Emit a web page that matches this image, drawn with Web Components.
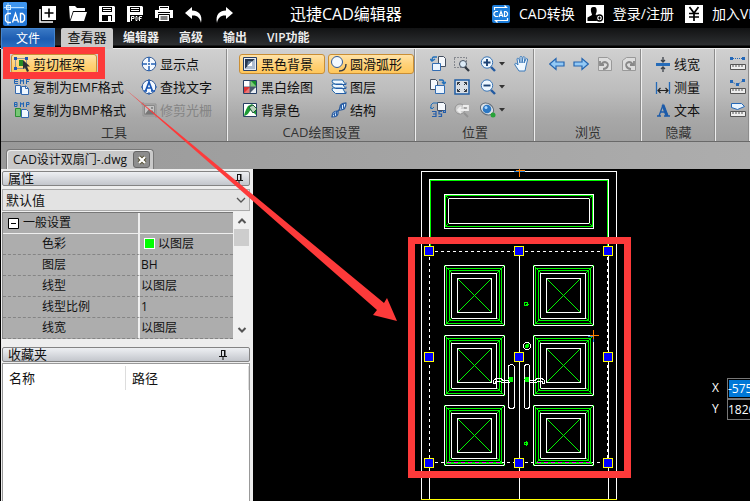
<!DOCTYPE html>
<html lang="zh-CN">
<head>
<meta charset="utf-8">
<title>迅捷CAD编辑器</title>
<style>
html, body { margin: 0; height: 100%; }
body { overflow: hidden; background: #000; font: 13px/20px "Open Sans", "Noto Sans CJK SC", sans-serif; color: #111; }
</style>
</head>
<body>
<cad-app></cad-app>
<script>
const ICONS = {
  logo: ['0 0 24 24', '<rect width="24" height="24" rx="2" fill="#2478d8"/><path d="M0 2a2 2 0 0 1 2-2h20a2 2 0 0 1 2 2v5H0z" fill="#3f95ee"/><path d="M5 1v22M1 5.500h20" stroke="#b5dcff" fill="none"/><rect x="3.500" y="3.500" width="4" height="4" fill="none" stroke="#d8eeff"/><path d="M8 11.500H4.500l-2 2v5l2 2H8M9.500 20.500L12.500 11.500l3 9M10.500 18h4M17.500 11.500v8.500h2l2-2v-4.500l-2-2z" fill="none" stroke="#fff" stroke-width="1.400"/>'],
  add: ['0 0 18 18', '<path d="M3 1h14v14H3z" fill="#fff"/><path d="M1 4v13h13" fill="none" stroke="#fff" stroke-width="1.500"/><path d="M10 3.500v9M5.500 8h9" stroke="#000" stroke-width="1.600"/>'],
  open: ['0 0 18 18', '<path d="M0 1h6l2 2h8v3H4L1 15z" fill="#fff"/><path d="M4.500 7H18l-3 9H1.500z" fill="#fff"/>'],
  save: ['0 0 16 18', '<path d="M0 1h15l1 1v15H0z" fill="#fff"/><path d="M3 2h10v5H3z" fill="#000"/><path d="M4 3.500h8M4 5.500h8" stroke="#fff"/><path d="M3 10h10v6H3z" fill="#000"/><path d="M9 11h3v5H9z" fill="#fff"/>'],
  pdf: ['0 0 16 18', '<path d="M0 1h15l1 1v15H0z" fill="#fff"/><path d="M3 2h10v5H3z" fill="#000"/><path d="M4 3.500h8M4 5.500h8" stroke="#fff"/><path d="M3 10h13v7H3z" fill="#000"/><path d="M4.500 16v-4.500H7v2H4.500M9 11.500v4h1l1-1v-2l-1-1zM12.500 16v-4.500H15M12.500 13.500h2" fill="none" stroke="#fff"/>'],
  print: ['0 0 18 18', '<path d="M4 1h10v4H4zM0 5h18v8h-3v-2H3v2H0z" fill="#fff"/><path d="M5 2.500h8M3 7.500h12" stroke="#000"/><path d="M3.500 9.500h11v7h-11z" fill="#fff" stroke="#000"/><path d="M5.500 12h7M5.500 14h7" stroke="#000"/>'],
  undo: ['0 0 18 18', '<path d="M0 8l7-6v3.500c6 0 11 4 9 12.500C15 12.500 12 10 7 10.500V14z" fill="#fff"/>'],
  redo: ['0 0 18 18', '<path d="M18 8l-7-6v3.500C5 5.500 0 9.500 2 18 3 12.500 6 10 11 10.500V14z" fill="#fff"/>'],
  convert: ['0 0 18 18', '<rect width="18" height="18" rx="2" fill="#1d7edb"/><path d="M2.500 5V2.500h12l-2-2M15.500 13v2.500h-12l2 2" fill="none" stroke="#fff" stroke-width="1.200"/><path d="M6 6.500H3.500L2 8v2l1.500 1.500H6M7 12l2-5.500 2 5.500M7.500 10.500h3M12.500 6.500v5H14L15.500 10V8L14 6.500z" fill="none" stroke="#fff" stroke-width="1.200"/>'],
  user: ['0 0 18 18', '<path d="M0 0h18v18H0z" fill="#fff"/><path d="M7.500 2C5 2 4.500 4 5 6.500c.3 1.700 1 2.500 1 3.500L1.500 12.500V16H11l-1-4 1-2-1.500-.5C10.500 8 11 6 10.500 4S9 2 7.500 2z" fill="#000"/><circle cx="13.500" cy="13" r="3" fill="#fff" stroke="#000" stroke-width="1.300"/><path d="M13.500 11.500v3M12 13h3" stroke="#000"/>'],
  yen: ['0 0 18 18', '<path d="M0 0h18v18H0z" fill="#fff"/><path d="M4.500 2L9 8l4.500-6M9 8v8M4 8.500h10M4 12h10" fill="none" stroke="#000" stroke-width="1.700"/>'],
  clip: ['0 0 16 16', '<path d="M1.500 2.500h11v10h-11z" fill="none" stroke="#2457a8" stroke-dasharray="1 1"/><path d="M0 1h3v3H0zM11 1h3v3h-3zM0 11h3v3H0z" fill="#1e55b5"/><path d="M5 4h4v6H5z" fill="#258b25"/><path d="M9 4v9l2-1.500 2 4.500 2-1-2-4.500h3z" fill="#2c3037"/>'],
  emf: ['0 0 16 16', '<path d="M4 .5H.5v4H4M.5 2.500H4M6.500 5V.5L8 2.500 9.500.5V5M12.500 5V.5H16M12.500 2.500H15" fill="none" stroke="#2065b5"/><path d="M1.500 6.500h5v8h-5zM7.500 7.500h5l2 2v6h-7z" fill="#eff7ff" stroke="#3569ae"/><path d="M11.500 6.500v3h3" fill="none" stroke="#3569ae"/>'],
  bmp: ['0 0 16 16', '<path d="M.5.5H3v4H.5zM.5 2.500H3M6.500 5V.5L8 2.500 9.500.5V5M12.500 5V.5H15v2h-2.500" fill="none" stroke="#2065b5"/><path d="M1.500 6.500h5v8h-5z" fill="#77c775" stroke="#2c8e35"/><path d="M7.500 7.500h5l2 2v6h-7z" fill="#eff7ff" stroke="#3569ae"/>'],
  target: ['0 0 16 16', '<circle cx="8" cy="8" r="6.800" fill="#f4f9ff" stroke="#315b98"/><path d="M8 1v5M8 10v5M1 8h5M10 8h5" stroke="#2461b5" stroke-width="1.500"/><circle cx="8" cy="8" r="1" fill="#2461b5"/>'],
  find: ['0 0 16 16', '<circle cx="8" cy="8" r="6.800" fill="#f4f9ff" stroke="#315b98"/><path d="M8 0v3M8 13v3M0 8h2M14 8h2" stroke="#2461b5"/><path d="M3 12h3M10 12h4M4.500 12L8 3l3.500 9M6 9h4" fill="none" stroke="#1856b4" stroke-width="1.700"/>'],
  raster: ['0 0 16 16', '<path d="M3.500 3.500h10v9h-10z" fill="#c5c5c5" stroke="#888"/><path d="M2 0v14h14M0 2h15v14" fill="none" stroke="#929292"/><path d="M4 12l4-5 2 2 1-1 3 4z" fill="#777"/><circle cx="11" cy="6" r="1" fill="#777"/>'],
  black: ['0 0 16 16', '<path d="M1.500 1.500h13v13h-13z" fill="#e7edf5" stroke="#263e66"/><path d="M3 3h10L3 13z" fill="#27384f"/><path d="M13 3v10H3z" fill="#aebdd0"/><path d="M10 5v5H5z" fill="#fff"/><path d="M5 10l5-5H6z" fill="#607a98"/>'],
  mono: ['0 0 16 16', '<path d="M1.500 1.500h13v13h-13z" fill="#fff" stroke="#273e63"/><path d="M2 8h6v6H2z" fill="#eb7777"/><path d="M8 2h6v6H8z" fill="#79c875"/><path d="M8 8h6v6H8z" fill="#e9eef4"/><path d="M8 2v12M2 8h12" stroke="#52647b"/><path d="M8 8v6l6-6z" fill="#46566b"/><path d="M2 14V8h6z" fill="#d33"/><path d="M9 2h5v5z" fill="#16902a"/>'],
  bg: ['0 0 16 16', '<path d="M1.500 1.500h13v13h-13z" fill="#fff" stroke="#273e63"/><path d="M2 14c1-5 2-6 4-10l4-2 4 5v6l-5-5c-2 1-2 5-7 6z" fill="#1d9b35"/><path d="M7 5l4-2 4 4-4 4z" fill="#bbd4bc" stroke="#1b5e37"/>'],
  arc: ['0 0 16 16', '<circle cx="6" cy="6" r="5.500" fill="#f3f9ff" stroke="#325a95"/><path d="M15 8c0 4-2 7-7 7" fill="none" stroke="#333b47" stroke-width="1.400"/>'],
  layers: ['0 0 16 16', '<path d="M1.500 9h10l3 5.500h-10L1 11zM1.500 5h10l3 4.500h-10L1 7zM1.500 1h10l3 4.500h-10L1 3z" fill="#eff8ff" stroke="#266bad"/><path d="M5 5.500h10v-2M5 9.500h10v-2M5 14.500h10v-2" fill="none" stroke="#245ca5"/>'],
  structure: ['0 0 16 16', '<path d="M1 15c0-3 1-6 5-6 3 0 3-2 3-4 0-3 3-4 6-4 0 3-1 7-5 7-3 0-3 1-3 3 0 3-3 4-6 4z" fill="#dceeff" stroke="#28599c" stroke-width="1.200"/><path d="M1 15C2 10 6 12 8 8s2-6 7-7" fill="none" stroke="#28599c"/><path d="M3.500 10.500v4M5.500 9v5M10.500 2.500v5M12.500 1.500v5" stroke="#275fac"/>'],
  cclw: ['0 0 16 16', '<path d="M8.500.5h5l2 2v8h-7z" fill="#f5f8fc" stroke="#444f60"/><path d="M2.500 7.500h8v7h-8z" fill="#eaf4ff" stroke="#326db3"/><path d="M7 1H4C2 1 2 3 2 5M0 3l2 2 3-2" fill="none" stroke="#2270bb" stroke-width="1.400"/>'],
  cw: ['0 0 16 16', '<path d="M.5.5h5l2 2v8h-7z" fill="#f5f8fc" stroke="#444f60"/><path d="M5.500 6.500h9v8h-9z" fill="#eaf4ff" stroke="#326db3"/><path d="M9 1h3c2 0 2 2 2 4M12 3l2 2 2-2" fill="none" stroke="#2270bb" stroke-width="1.400"/>'],
  rotate35: ['0 0 16 16', '<path d="M7.500.5h6l2 2v6h-8z" fill="#f5f8fc" stroke="#444f60"/><path d="M8 1H3L1 3v4M0 5l2 2 2-2" fill="none" stroke="#2270bb"/><path d="M2 9.500h4v5H2M3 12h3M12 9.500H9V12h2.500v2.500H8.500M13.500 8.500h2v2h-2z" fill="none" stroke="#245da9" stroke-width="1.200"/>'],
  area: ['0 0 16 16', '<path d="M.5 1.500h12v10H.5z" fill="none" stroke="#424854" stroke-dasharray="1 2"/><circle cx="9" cy="8" r="3.500" fill="#ddebf7" stroke="#475363"/><path d="M11 11l4 4" stroke="#303740" stroke-width="2.300"/>'],
  fit: ['0 0 16 16', '<path d="M1 1h14v14H1z" fill="#d9dee4" stroke="#205ea4" stroke-width="1.500"/><path d="M3.500 6V3.500H6M10 3.500h2.500V6M12.500 10v2.500H10M6 12.500H3.500V10M3.500 3.500L6 6M12.500 3.500L10 6M3.500 12.500L6 10M12.500 12.500L10 10" fill="none" stroke="#30363f"/>'],
  prev: ['0 0 16 16', '<circle cx="6" cy="7" r="5" fill="#cfcfcf" stroke="#929292"/><path d="M10 11l4 4" stroke="#929292" stroke-width="2"/><path d="M4 8h10V4H9M7 5L4 8l3 3" fill="none" stroke="#eee" stroke-width="1.800"/>'],
  plus: ['0 0 16 16', '<circle cx="7" cy="6.500" r="5.700" fill="#edf7ff" stroke="#3874b5"/><path d="M11 11l4 4" stroke="#225aa1" stroke-width="2.400"/><path d="M7 3v7M3.500 6.500h7" stroke="#1e4374" stroke-width="1.900"/>'],
  minus: ['0 0 16 16', '<circle cx="7" cy="6.500" r="5.700" fill="#edf7ff" stroke="#3874b5"/><path d="M11 11l4 4" stroke="#225aa1" stroke-width="2.400"/><path d="M3.500 6.500h7" stroke="#1e4374" stroke-width="1.900"/>'],
  orbit: ['0 0 16 16', '<ellipse cx="7" cy="7" rx="7" ry="5.500" transform="rotate(35 7 7)" fill="#dce1e6" stroke="#626d78"/><circle cx="7" cy="7" r="4.300" fill="#2c78c4"/><circle cx="6" cy="5.500" r="1.500" fill="#abd8ff"/><circle cx="13" cy="13" r="2.500" fill="#27a338"/>'],
  hand: ['0 0 16 16', '<path d="M5 15L1 9c-1-2 1-2 2-1l1 1-1-6c0-1 1.500-1 2 0l1 4V1.500C6 0 8 0 8 1.500V7l1-5.500C9 0 11 .5 11 2l-1 5 2-4c.5-1 2-.5 1.500 1L12 10l-1 5z" fill="#eff8ff" stroke="#3a79b9"/>'],
  left: ['0 0 16 16', '<path d="M.7 8L7 2.500V6h8v4H7v3.500z" fill="#93c9f5" stroke="#2465b0" stroke-width="1.200"/>'],
  right: ['0 0 16 16', '<path d="M15.300 8L9 2.500V6H1v4h8v3.500z" fill="#93c9f5" stroke="#2465b0" stroke-width="1.200"/>'],
  pageback: ['0 0 16 16', '<path d="M1.500 1.500h9l4 3v10h-13z" fill="#ddd" stroke="#999"/><path d="M6 13c5 0 7-6 2-7-2 0-3 1-4 3M3 5v4h4" fill="none" stroke="#888" stroke-width="1.800"/>'],
  pagenext: ['0 0 16 16', '<path d="M1.500 4.500l4-3h9v13h-13z" fill="#ddd" stroke="#999"/><path d="M10 13c-5 0-7-6-2-7 2 0 3 1 4 3M13 5v4H9" fill="none" stroke="#888" stroke-width="1.800"/>'],
  lwidth: ['0 0 16 16', '<path d="M1 7h14v3H1z" fill="#266cb9"/><path d="M8 1v5M6 4l2 2 2-2M8 16v-5M6 13l2-2 2 2" fill="none" stroke="#3b4149" stroke-width="1.300"/>'],
  measure: ['0 0 16 16', '<path d="M1.500 3v12M14.500 3v12" stroke="#236ab9" stroke-width="1.300"/><path d="M3 11.500h10M5.500 9L3 11.500 5.500 14M10.500 9l2.500 2.500L10.500 14" fill="none" stroke="#222" stroke-width="1.200"/>'],
  letter: ['0 0 16 16', '<path d="M2 14h4M9 14h6M4 14l4-11 5 11M5.500 10h5" fill="none" stroke="#1c5ba9" stroke-width="1.300"/><path d="M8 3l4 11" stroke="#1c5ba9" stroke-width="3"/>'],
  ruler1: ['0 0 16 16', '<path d="M1 2.500h14" stroke="#2468b8" stroke-dasharray="1 1"/><path d="M0 1h3v3H0zM12 1h3v3h-3z" fill="#2468b8"/><path d="M.5 8.500h15v5H.5z" fill="#eee" stroke="#555"/><path d="M3 9v2M6 9v2M9 9v2M12 9v2" stroke="#555"/>'],
  ruler2: ['0 0 16 16', '<path d="M1 2l6 4 7-5" fill="none" stroke="#2468b8" stroke-dasharray="1 1"/><path d="M0 1h3v3H0zM6 4h3v3H6zM12 0h3v3h-3z" fill="#2468b8"/><path d="M.5 9.500h15v5H.5z" fill="#eee" stroke="#555"/><path d="M3 10v2M6 10v2M9 10v2M12 10v2" stroke="#555"/>'],
  ruler3: ['0 0 16 16', '<path d="M1.500 1.500h10l3 3-7 3-6-2z" fill="#eaf5ff" stroke="#2468b8"/><path d="M.5 9.500h15v5H.5z" fill="#eee" stroke="#555"/><path d="M3 10v2M6 10v2M9 10v2M12 10v2" stroke="#555"/>'],
  pin: ['0 0 10 12', '<path d="M3.500 1v6M3 1.500h4M1 7.500h8M5 8v3" fill="none" stroke="#111"/><path d="M6 1h1.500v6H6z" fill="#111"/>'],
  chevron: ['0 0 10 10', '<path d="M1 3l4 4 4-4" fill="none" stroke="#555" stroke-width="1.300"/>'],
  up: ['0 0 10 10', '<path d="M1.500 7L5 3.500 8.500 7" fill="none" stroke="#555" stroke-width="2"/>'],
  down: ['0 0 10 10', '<path d="M1.500 3L5 6.500 8.500 3" fill="none" stroke="#555" stroke-width="2"/>'],
  close: ['0 0 10 10', '<path d="M2 2l6 6M8 2L2 8" stroke="#555033" stroke-width="4"/><path d="M2 2l6 6M8 2L2 8" stroke="#fff" stroke-width="2.200"/>'],
  collapse: ['0 0 11 11', '<path d="M.5.500h10v10H.5z" fill="#fff" stroke="#000"/><path d="M3 5.500h5" stroke="#000"/>'],
  caret: ['0 0 6 4', '<path d="M0 0h6L3 3.500z" fill="#333"/>']
};

function define(name, html) {
  customElements.define(name, class extends HTMLElement {
    connectedCallback() {
      if (this.shadowRoot) return;
      this.attachShadow({ mode: 'open' }).innerHTML = typeof html === 'function' ? html(this) : html;
    }
  });
}
const RESET = 'button{font:inherit;color:inherit;background:none;border:0;padding:0;margin:0}a{color:inherit;text-decoration:none}*{box-sizing:border-box}';

define('cad-icon', el => {
  const [box, art] = ICONS[el.getAttribute('name')];
  const [, , w, h] = box.split(' ');
  return `<style>:host{display:block;flex:none;line-height:0}svg{display:block}</style><svg width="${w}" height="${h}" viewBox="${box}" aria-hidden="true">${art}</svg>`;
});

define('title-bar', `<style>${RESET}
:host{display:flex;align-items:center;height:28px;background:#000;color:#fff;padding-left:3px;overflow:hidden}
.quick{display:flex;gap:12px;align-items:center;flex:none}
h1{font:inherit;font-size:16px;line-height:28px;margin:0;padding-left:57px;flex:1 0 259px}
nav{display:flex;flex:none;font-size:14px;gap:11px}
a{display:flex;gap:9px;align-items:center;white-space:nowrap}
</style>
<div class="quick"><cad-icon name="logo"></cad-icon>
<button aria-label="新建"><cad-icon name="add"></cad-icon></button><button aria-label="打开"><cad-icon name="open"></cad-icon></button><button aria-label="保存"><cad-icon name="save"></cad-icon></button><button aria-label="保存为PDF"><cad-icon name="pdf"></cad-icon></button><button aria-label="打印"><cad-icon name="print"></cad-icon></button><button aria-label="撤销"><cad-icon name="undo"></cad-icon></button><button aria-label="重做"><cad-icon name="redo"></cad-icon></button></div>
<h1><slot></slot></h1>
<nav><a href="#convert"><cad-icon name="convert"></cad-icon>CAD转换</a><a href="#login"><cad-icon name="user"></cad-icon>登录/注册</a><a href="#vip"><cad-icon name="yen"></cad-icon>加入VIP</a></nav>`);

define('menu-bar', `<style>${RESET}
:host{display:flex;align-items:stretch;height:21px;padding-left:1px;background:linear-gradient(#121314,#2d2f31 17px,#000 18px,#000 20px,#eee 20px);color:#eee;font-size:12px;font-weight:600;line-height:19px}
button{flex:none;padding:0 10px 2px}
.file{width:54px;background:linear-gradient(#3978c4,#1d5db2 50%,#2d73c5);color:#fff;font-weight:400;margin-right:6px;border:1px solid #4385cf;border-bottom:0}
.on{width:52px;padding:0 0 2px;background:#cbcbcb;color:#111;font-size:13px;font-weight:400;border-radius:2px 2px 0 0}
</style><button class="file">文件</button><button class="on">查看器</button><button>编辑器</button><button>高级</button><button>输出</button><button>VIP功能</button>`);

define('ribbon-button', el => `<style>${RESET}
:host{display:block;height:20px}
button{display:flex;align-items:center;gap:3px;height:20px;min-width:86px;padding:0 2px;border:1px solid transparent;border-radius:3px;white-space:nowrap;line-height:18px}
:host([on]) button{background:linear-gradient(#ffe3a8,#ffd27a 50%,#ffc75b);border-color:#c98e35}
button:disabled{color:#858585}
</style><button ${el.hasAttribute('disabled') ? 'disabled' : ''}><cad-icon name="${el.getAttribute('icon')}"></cad-icon><slot></slot></button>`);

define('tool-button', el => `<style>${RESET}
:host{display:block;height:20px}button{display:flex;align-items:center;gap:3px;height:20px}
</style><button aria-label="${el.getAttribute('label')}"><cad-icon name="${el.getAttribute('icon')}"></cad-icon>${el.hasAttribute('menu') ? '<cad-icon name="caret"></cad-icon>' : ''}</button>`);

define('ribbon-group', el => `<style>
:host{display:flex;flex-direction:column;flex:none;box-sizing:border-box;height:93px;padding-top:5px;border-right:1px solid #eee;box-shadow:inset -1px 0 #8c8c8c}
:host(:last-of-type){flex:1 0 34px;overflow:hidden}
.tools{display:grid;grid-auto-flow:column;grid-template-rows:repeat(3,20px);justify-content:start;gap:3px 0;padding-left:var(--start)}
h2{margin:0;font:inherit;line-height:20px;text-align:center;padding-top:2px;color:#333}
</style><div class="tools"><slot></slot></div><h2>${el.getAttribute('label')}</h2>`);

define('cad-ribbon', `<style>
:host{display:flex;margin-left:1px;height:93px;background:linear-gradient(#d0d0d0,#bdbdbd 45%,#a8a8a8 75%,#9f9f9f);border-bottom:1px solid #696969;overflow:hidden;box-sizing:border-box}
.a{width:227px;--start:10px}.b{width:188px;--start:11px}.c{width:119px;--start:14px}.d{width:107px;--start:14px}.e{width:74px;--start:10px}.f{--start:14px}
.a ribbon-button:nth-child(-n+3){width:127px}.b ribbon-button:nth-child(-n+3){width:89px}
.c tool-button:nth-child(-n+3){width:24px}.c tool-button:nth-child(n+4):nth-child(-n+6){width:26px}.c tool-button:nth-child(n+7){width:34px}.c tool-button:last-child{width:16px}
.d tool-button{width:24px;grid-row:1}
</style>
<ribbon-group class="a" label="工具"><ribbon-button icon="clip" on>剪切框架</ribbon-button><ribbon-button icon="emf">复制为EMF格式</ribbon-button><ribbon-button icon="bmp">复制为BMP格式</ribbon-button><ribbon-button icon="target">显示点</ribbon-button><ribbon-button icon="find">查找文字</ribbon-button><ribbon-button icon="raster" disabled>修剪光栅</ribbon-button></ribbon-group>
<ribbon-group class="b" label="CAD绘图设置"><ribbon-button icon="black" on>黑色背景</ribbon-button><ribbon-button icon="mono">黑白绘图</ribbon-button><ribbon-button icon="bg">背景色</ribbon-button><ribbon-button icon="arc" on>圆滑弧形</ribbon-button><ribbon-button icon="layers">图层</ribbon-button><ribbon-button icon="structure">结构</ribbon-button></ribbon-group>
<ribbon-group class="c" label="位置"><tool-button icon="cclw" label="左旋转"></tool-button><tool-button icon="cw" label="右旋转"></tool-button><tool-button icon="rotate35" label="旋转35°"></tool-button><tool-button icon="area" label="窗口缩放"></tool-button><tool-button icon="fit" label="适应窗口"></tool-button><tool-button icon="prev" label="上一视图"></tool-button><tool-button icon="plus" menu label="放大"></tool-button><tool-button icon="minus" menu label="缩小"></tool-button><tool-button icon="orbit" menu label="三维动态"></tool-button><tool-button icon="hand" label="平移"></tool-button></ribbon-group>
<ribbon-group class="d" label="浏览"><tool-button icon="left" label="后退"></tool-button><tool-button icon="right" label="前进"></tool-button><tool-button icon="pageback" label="撤销视图"></tool-button><tool-button icon="pagenext" label="重做视图"></tool-button></ribbon-group>
<ribbon-group class="e" label="隐藏"><ribbon-button icon="lwidth">线宽</ribbon-button><ribbon-button icon="measure">测量</ribbon-button><ribbon-button icon="letter">文本</ribbon-button></ribbon-group>
<ribbon-group class="f" label=""><tool-button icon="ruler1" label="距离"></tool-button><tool-button icon="ruler2" label="多段线长度"></tool-button><tool-button icon="ruler3" label="面积"></tool-button></ribbon-group>`);

define('document-tabs', `<style>${RESET}
:host{display:flex;align-items:flex-end;height:27px;margin-left:1px;padding-left:5px;background:linear-gradient(90deg,#999,#adadad);box-sizing:border-box}
.tab{display:flex;align-items:center;gap:6px;height:20px;padding:0 3px 0 6px;border:1px solid #777;border-bottom:0;border-radius:4px 4px 0 0;background:#c9c9c9;box-shadow:inset 1px 1px #eee;font-size:12px}
button{display:grid;place-items:center;width:17px;height:17px;background:#8d8d8d;border:1px solid #666;border-radius:3px}
</style><div class="tab"><slot></slot><button aria-label="关闭"><cad-icon name="close"></cad-icon></button></div>`);

define('panel-header', `<style>${RESET}
:host{display:flex;align-items:center;justify-content:space-between;height:15px;box-sizing:border-box;border:1px solid #848484;border-radius:2px;background:linear-gradient(#eef0f3,#c3c6cc);padding:0 5px;line-height:13px}
button{display:block;margin-right:var(--pin,0)}</style><slot></slot><button aria-label="固定"><cad-icon name="pin"></cad-icon></button>`);

define('properties-panel', `<style>${RESET}
:host{display:block;padding:2px 3px 0 2px}
label{display:flex;align-items:center;height:22px;margin:3px 0 1px;border:1px solid #aaa;background:#e3e3e3;padding-right:3px}
select{appearance:none;border:0;background:none;font:inherit;color:inherit;flex:1;padding:0 3px;height:20px}
.grid{display:flex;background:#f4f4f4;border-left:1px solid #888}
table{flex:1;table-layout:fixed;border-collapse:separate;border-spacing:0;background:#adadad;font-size:12px;line-height:20px;border-top:1px solid #777}
th,td{height:21px;padding:0;font-weight:400;text-align:left;border-bottom:1px dashed #858585;white-space:nowrap}
th{width:137px;padding-left:39px;border-right:2px solid #eee}
td{padding-left:1px}
.head th{padding-left:5px}.head th,.head td{height:20px;border-bottom:1px solid #eee}
.head th div{display:flex;gap:4px;align-items:center}
.swatch{display:inline-block;width:11px;height:11px;margin:0 3px;border:1px solid #fff;background:#0f0;vertical-align:-1px}
.scroll{width:17px;display:flex;flex-direction:column;align-items:center;background:#f0f0f0;padding:4px 0}
.thumb{width:15px;height:17px;background:#cdcdcd;margin:3px 0 auto}
</style><panel-header>属性</panel-header>
<label><select aria-label="属性集"><option>默认值</option></select><cad-icon name="chevron"></cad-icon></label>
<div class="grid"><table><tr class="head"><th><div><cad-icon name="collapse"></cad-icon>一般设置</div></th><td></td></tr>
<tr><th>色彩</th><td><span class="swatch"></span>以图层</td></tr><tr><th>图层</th><td>BH</td></tr><tr><th>线型</th><td>以图层</td></tr><tr><th>线型比例</th><td>1</td></tr><tr><th>线宽</th><td>以图层</td></tr></table>
<div class="scroll"><button aria-label="向上"><cad-icon name="up"></cad-icon></button><div class="thumb"></div><button aria-label="向下"><cad-icon name="down"></cad-icon></button></div></div>`);

define('favorites-panel', `<style>
:host{display:flex;flex-direction:column;flex:1;padding:8px 3px 0 2px}
.list{flex:1;background:#fff;border:1px solid #999;border-bottom:0;margin-top:1px}
table{width:100%;table-layout:fixed;border-spacing:0 2px}
th{font-weight:400;text-align:left;height:24px;padding:0 6px;border-right:1px solid #ddd}
</style><panel-header style="--pin:16px">收藏夹</panel-header><div class="list"><table><tr><th>名称</th><th>路径</th></tr></table></div>`);

function doorArt() {
  const rect = (x, y, w, h, c) => `<rect x="${x}.5" y="${y}.5" width="${w}" height="${h}" stroke="${c}"/>`;
  const W = '#fff', G = '#00f500';
  let s = `<path d="M421.500 499V171.500h195V499M429.500 251V179.500h179V251M608.500 251V499M429.500 463V499M519.500 251V499" stroke="#fff"/>
<path d="M430.500 250V180.500h177V250" stroke="${G}"/><path d="M421 499.500h196" stroke="#ff0"/>`;
  s += rect(444, 194, 149, 34, W) + rect(445, 195, 147, 31, G) + rect(448, 198, 141, 25, W);
  s += `<path d="M445 195l4 4M593 195l-4 4M445 227l4-4M593 227l-4-4" stroke="${G}"/>`;
  for (const x of [444, 533]) for (const y of [265, 335, 405]) {
    s += rect(x, y, 60, 60, W) + rect(x + 2, y + 3, 55, 55, G) + rect(x + 5, y + 5, 50, 50, G) + rect(x + 7, y + 8, 45, 45, W) + rect(x + 13, y + 13, 34, 34, W);
    s += `<path d="M${x} ${y}l8 8M${x + 61} ${y}l-8 8M${x} ${y + 61}l8-8M${x + 61} ${y + 61}l-8-8M${x + 14} ${y + 14}l33 33M${x + 47} ${y + 14}l-33 33" stroke="${G}"/>`;
  }
  s += `<rect x="508.500" y="364.500" width="6" height="44" rx="3" stroke="#fff"/><rect x="524.500" y="364.500" width="5" height="44" rx="2.500" stroke="#fff"/>
<path d="M509 380.500h-6l-2-2h-5l-2.500 2v3h2v-2h4l3 1h7M527 380.500h8l2-2h5l2.500 2v3h-2v-2h-4l-3 1h-7" stroke="#fff"/>
<circle cx="511" cy="379.500" r="2.500" fill="${G}"/><circle cx="527" cy="379.500" r="2.500" fill="${G}"/>
<circle cx="527" cy="346" r="3.500" stroke="#fff"/><path d="M525 346l3-2v3l-3 1z" fill="${G}" stroke="${G}"/>
<path d="M524.500 302.500h3v3h-3zM526 304h3M524.500 442.500h3v2h-3zM526 441v5" stroke="${G}"/>
<path d="M429.500 251V463M607.500 251V463" stroke="#fff" stroke-dasharray="3 3"/><path d="M429 251.500h179M429 462.500h179" stroke="#fff" stroke-dasharray="3 3"/>
<path d="M447 462.500h55M537 462.500h55" stroke="${G}"/><path d="M447 462.500h55M537 462.500h55" stroke="#f0f" stroke-dasharray="4 3"/>
<path d="M514 171.500h11M588 336.500h5v5" stroke="#2f86dc"/><path d="M519 169v8M516 170.500h9M593 330v9M590 335.500h9" stroke="#ff8000"/>`;
  for (const x of [424, 514, 603]) for (const y of [246, 352, 458]) s += `<rect x="${x}.5" y="${y}.5" width="9" height="9" fill="#00f" stroke="#ff0"/>`;
  return s;
}
define('drawing-canvas', `<style>
:host{display:block;position:relative;flex:1;min-width:0;background:#000;overflow:hidden;color:#fff;font-size:12px}
svg{display:block}
form{position:absolute;left:458px;top:209px;display:grid;grid-template-columns:15px 110px;line-height:20px}
input{font:inherit;color:#fff;background:#000;border:1px solid #777;height:21px;padding:0;box-sizing:border-box;min-width:0}
.sel{background:#0078d7;box-shadow:inset 0 0 0 1px #000}
</style><svg width="496" height="332" viewBox="254 169 496 332" fill="none" shape-rendering="crispEdges" role="img" aria-label="双扇门">${doorArt()}</svg>
<form><label for="x">X</label><input id="x" class="sel" value="-575"><label for="y">Y</label><input id="y" value="1826"></form>`);

define('guide-marks', `<style>:host{position:absolute;inset:0;pointer-events:none;overflow:hidden}svg{display:block;overflow:visible}</style>
<svg width="750" height="501" viewBox="0 0 750 501" aria-hidden="true"><rect x="6.500" y="50.500" width="95" height="25" fill="none" stroke="#fd3a3a" stroke-width="7"/><rect x="411.500" y="240.500" width="216" height="234" fill="none" stroke="#fd3a3a" stroke-width="7"/><path d="M124 88L384 303l3-5 10 23-24-6 4-5z" fill="#fd3a3a"/></svg>`);

define('cad-app', `<style>
:host{display:flex;flex-direction:column;height:100%;position:relative;background:#000;overflow:hidden}
main{display:flex;flex:1;min-height:0}
aside{display:flex;flex-direction:column;flex:none;width:252px;margin:0 1px;box-sizing:border-box;background:#eee}
aside>*{margin-left:-1px}
</style><title-bar>迅捷CAD编辑器</title-bar><menu-bar></menu-bar><cad-ribbon></cad-ribbon><document-tabs>CAD设计双扇门-.dwg</document-tabs>
<main><aside><properties-panel></properties-panel><favorites-panel></favorites-panel></aside><drawing-canvas></drawing-canvas></main><guide-marks></guide-marks>`);
</script>
</body>
</html>
